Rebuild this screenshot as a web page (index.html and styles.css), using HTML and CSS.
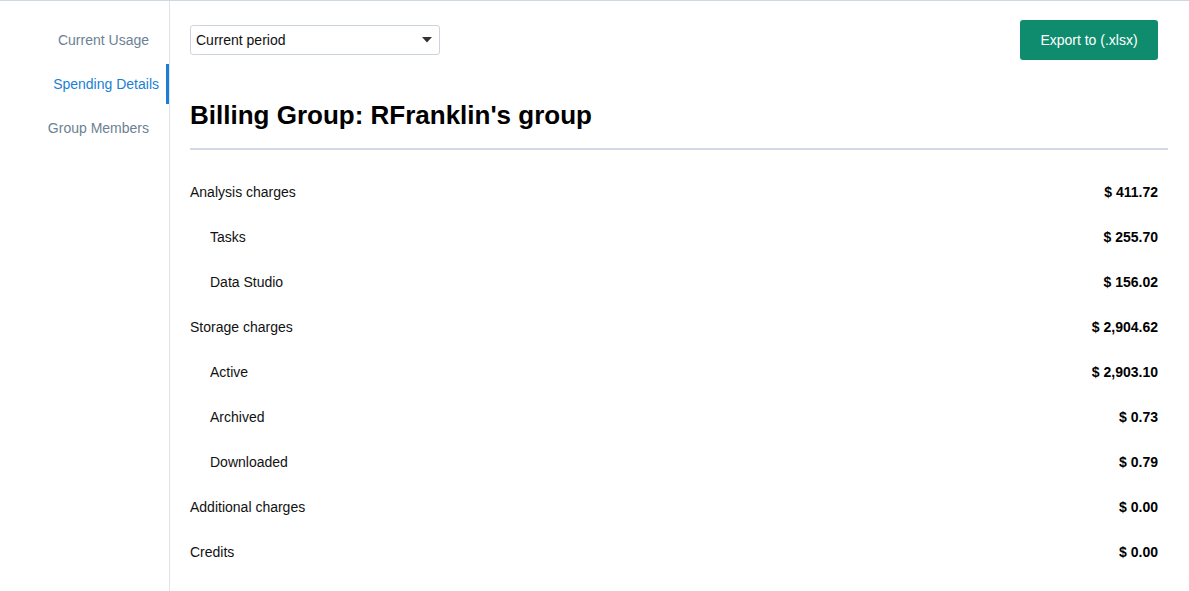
FILE: index.html
```html
<!DOCTYPE html>
<html>
<head>
<meta charset="utf-8">
<link rel="stylesheet" href="styles.css">
</head>
<body>
<div class="app">
  <nav class="sidebar">
    <a class="nav-item">Current Usage</a>
    <a class="nav-item active">Spending Details</a>
    <a class="nav-item">Group Members</a>
  </nav>
  <main class="main">
    <div class="topbar">
      <div class="select">
        <span>Current period</span>
        <svg class="caret" width="10" height="6" viewBox="0 0 10 6"><path d="M0 0 H10 L5 5.5 Z" fill="#333"/></svg>
      </div>
      <button class="export">Export to (.xlsx)</button>
    </div>
    <h1 class="title">Billing Group: RFranklin's group</h1>
    <div class="rule"></div>
    <div class="rows">
      <div class="row"><span>Analysis charges</span><span class="amt">$ 411.72</span></div>
      <div class="row sub"><span>Tasks</span><span class="amt">$ 255.70</span></div>
      <div class="row sub"><span>Data Studio</span><span class="amt">$ 156.02</span></div>
      <div class="row"><span>Storage charges</span><span class="amt">$ 2,904.62</span></div>
      <div class="row sub"><span>Active</span><span class="amt">$ 2,903.10</span></div>
      <div class="row sub"><span>Archived</span><span class="amt">$ 0.73</span></div>
      <div class="row sub"><span>Downloaded</span><span class="amt">$ 0.79</span></div>
      <div class="row"><span>Additional charges</span><span class="amt">$ 0.00</span></div>
      <div class="row"><span>Credits</span><span class="amt">$ 0.00</span></div>
    </div>
  </main>
</div>
</body>
</html>
```
FILE: styles.css
```css
html, body {
  margin: 0;
  padding: 0;
  background: #fff;
  font-family: "Liberation Sans", Arial, sans-serif;
  color: #111;
}
.app {
  display: flex;
  height: 591px;
  box-sizing: border-box;
  border-top: 1px solid #cfd7df;
  overflow: hidden;
}
.sidebar {
  width: 170px;
  flex: none;
  box-sizing: border-box;
  border-right: 1px solid #dde3e9;
  padding-top: 19px;
  display: flex;
  flex-direction: column;
  gap: 4px;
}
.nav-item {
  height: 40px;
  display: flex;
  align-items: center;
  justify-content: flex-end;
  padding-right: 20px;
  font-size: 14px;
  color: #6c8195;
}
.nav-item.active {
  color: #1b7fd3;
  padding-right: 7px;
  border-right: 3px solid #1b7fd3;
}
.main {
  flex: 1;
  padding: 19px 21px 0 20px;
  min-width: 0;
}
.topbar {
  display: flex;
  align-items: center;
  justify-content: space-between;
  height: 40px;
  padding-right: 10px;
}
.select {
  width: 250px;
  height: 30px;
  box-sizing: border-box;
  border: 1px solid #ccd4dc;
  border-radius: 3px;
  display: flex;
  align-items: center;
  justify-content: space-between;
  padding: 0 7px 0 5px;
  font-size: 14px;
  color: #111;
}
.caret { display: block; }
.export {
  width: 138px;
  height: 40px;
  border: none;
  border-radius: 3px;
  background: #0f8c6d;
  color: #fff;
  font-family: "Liberation Sans", Arial, sans-serif;
  font-size: 14px;
  padding: 0;
}
.title {
  margin: 40px 0 0 0;
  font-size: 26px;
  line-height: 30px;
  font-weight: bold;
  color: #000;
}
.rule {
  margin-top: 18px;
  height: 2px;
  background: #d2dbe3;
}
.rows {
  margin-top: 19px;
}
.row {
  height: 45px;
  display: flex;
  align-items: center;
  justify-content: space-between;
  padding-right: 10px;
  font-size: 14px;
  color: #111;
}
.row.sub {
  padding-left: 20px;
}
.amt {
  font-weight: bold;
  color: #000;
}
```
